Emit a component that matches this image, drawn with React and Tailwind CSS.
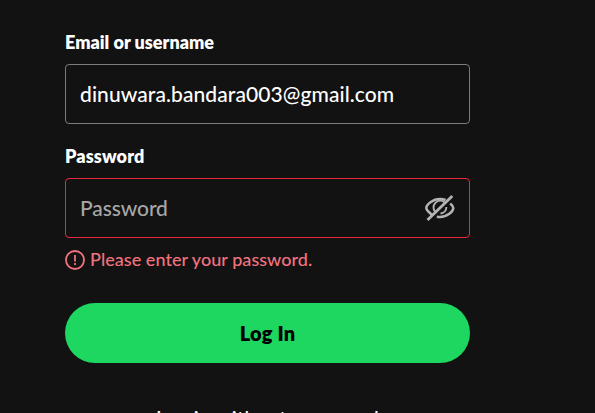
function HiddenEye() {
  return (
    <svg width="32" height="30" viewBox="0 0 32 30" fill="none" stroke="#b3b3b3" className="shrink-0">
      <path d="M8 22 L5.4 19.5 C3.4 17.8 2.3 16.3 2.3 15 C2.3 11.5 8.8 6 16 6 C18 6 20 6.4 21.6 7 M26.2 10.5 C28.3 12.2 29.3 13.7 29.3 15 C29.3 18.6 23.2 24 16 24 C14.7 24 13.9 23.9 12.8 23.7" strokeWidth="2.5" />
      <path d="M11 18.7 C8.9 16.2 9 12.2 11.4 9.8 C14.2 7 18 7.1 20.3 9.3 M22.4 14 C22.4 17.5 19.8 20.2 16.5 20.5" strokeWidth="1.9" />
      <path d="M3.5 27 L28.3 3" strokeWidth="2.8" />
    </svg>
  );
}

function AlertCircle() {
  return (
    <svg width="20" height="20" viewBox="0 0 20 20" fill="none" stroke="#f3727f" className="shrink-0">
      <circle cx="10" cy="10" r="9" strokeWidth="1.8" />
      <path d="M10 5 V11.5 M10 13 V15" strokeWidth="1.8" />
    </svg>
  );
}

export default function App() {
  return (
    <main className="h-[413px] w-[595px] overflow-hidden bg-[#121212] pl-[65px] pt-[30px] font-['Lato','Liberation_Sans',sans-serif] text-white">
      <form className="flex w-[405px] flex-col">
        <label className="h-6 whitespace-nowrap text-[18px] font-extrabold leading-6">Email or username</label>
        <div className="mt-2.5 flex h-[60px] items-center rounded-[4px] border border-[#7c7c7c] pl-3.5">
          <span className="whitespace-nowrap text-[21px] font-medium tracking-[0.08px]">dinuwara.bandara003@gmail.com</span>
        </div>
        <label className="mt-5 h-6 whitespace-nowrap text-[18px] font-extrabold leading-6 tracking-[0.1px]">Password</label>
        <div className="mt-2.5 flex h-[60px] items-center justify-between rounded-[4px] border border-[#ea2a3c] pl-3.5 pr-[13px]">
          <span className="text-[21px] font-medium tracking-[-0.1px] text-[#a7a7a7]">Password</span>
          <HiddenEye />
        </div>
        <div className="mt-2.5 flex h-6 items-center gap-[5px] text-[18px] font-medium text-[#f3727f]">
          <AlertCircle />
          <span className="whitespace-nowrap pb-0.5 tracking-[0.04px]">Please enter your password.</span>
        </div>
        <button type="button" className="mt-[31px] h-[60px] rounded-full bg-[#1ed760] text-[20px] font-extrabold tracking-[0.15px] text-black">Log In</button>
        <a className="mt-[39px] whitespace-nowrap text-center text-[20px] font-medium leading-[30px] tracking-[0.35px]">Log in without password</a>
      </form>
    </main>
  );
}
